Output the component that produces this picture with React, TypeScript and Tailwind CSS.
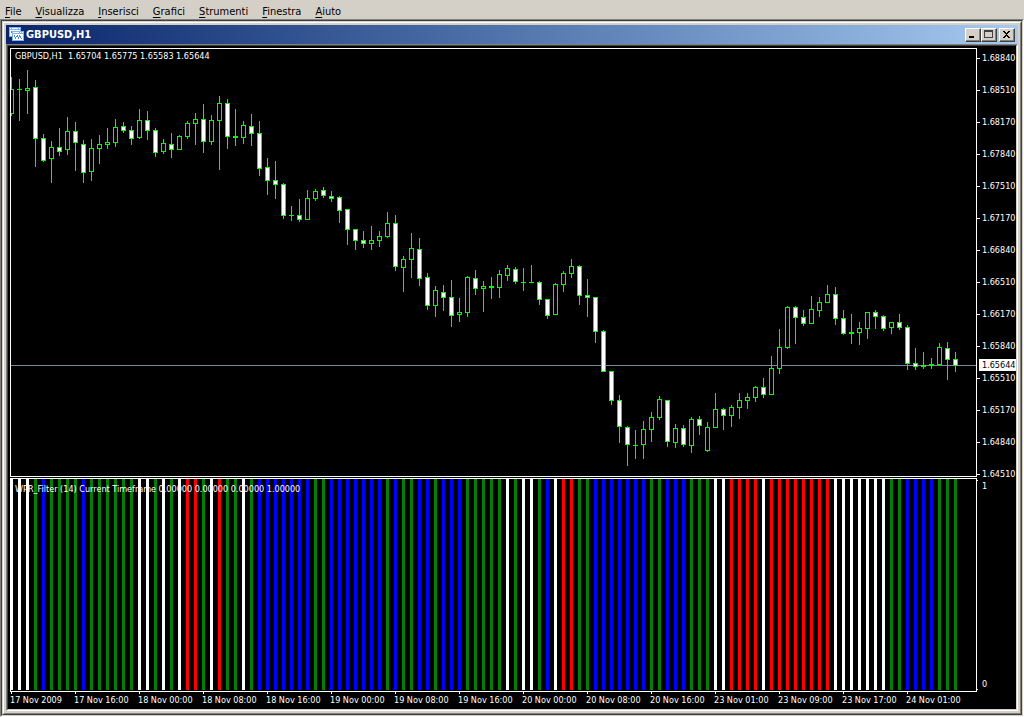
import React from 'react';

const STEP = 8;
const PANE_TOP = 49;
const BID_Y = 365;

type Candle = [high: number, low: number, top: number, bottom: number, bearish: number];

const CANDLES: Candle[] = [
  [77, 116, 89, 114, 0], [79, 121, 89, 90, 0], [70, 114, 88, 91, 0], [80, 167, 87, 139, 1],
  [134, 162, 138, 161, 1], [141, 183, 147, 159, 0], [128, 156, 147, 152, 1], [117, 155, 131, 150, 0],
  [122, 171, 131, 143, 1], [140, 183, 144, 173, 1], [139, 181, 148, 172, 0], [135, 164, 144, 149, 0],
  [128, 149, 142, 145, 0], [119, 147, 127, 143, 0], [122, 133, 126, 131, 1], [126, 145, 130, 139, 1],
  [109, 139, 120, 138, 0], [111, 140, 120, 131, 1], [128, 157, 130, 153, 1], [139, 154, 143, 152, 0],
  [133, 158, 144, 150, 1], [135, 150, 136, 150, 0], [121, 139, 123, 137, 0], [113, 145, 119, 124, 0],
  [104, 153, 119, 142, 1], [115, 145, 120, 142, 0], [96, 170, 103, 121, 0], [99, 149, 103, 137, 1],
  [109, 146, 136, 138, 0], [121, 144, 125, 138, 0], [114, 146, 126, 134, 1], [121, 176, 133, 169, 1],
  [158, 195, 167, 181, 1], [161, 199, 180, 185, 1], [183, 219, 184, 216, 1], [206, 221, 215, 216, 0],
  [199, 222, 215, 220, 1], [190, 220, 198, 220, 0], [189, 201, 191, 199, 0], [187, 198, 190, 196, 1],
  [191, 202, 196, 199, 1], [196, 223, 197, 211, 1], [209, 245, 209, 230, 1], [229, 250, 229, 241, 1],
  [231, 248, 240, 244, 1], [226, 250, 240, 244, 0], [231, 247, 236, 241, 0], [212, 238, 223, 237, 0],
  [215, 271, 223, 267, 1], [256, 292, 259, 268, 0], [233, 278, 248, 260, 0], [238, 286, 249, 279, 1],
  [273, 310, 277, 306, 1], [286, 317, 290, 306, 0], [285, 311, 292, 298, 1], [280, 327, 297, 316, 1],
  [298, 322, 312, 315, 0], [276, 317, 277, 313, 0], [270, 295, 278, 289, 1], [281, 312, 286, 289, 0],
  [277, 299, 286, 288, 0], [270, 298, 274, 288, 0], [265, 281, 268, 276, 0], [267, 284, 269, 282, 1],
  [268, 291, 282, 283, 0], [265, 283, 282, 283, 0], [281, 305, 282, 300, 1], [299, 319, 299, 316, 1],
  [283, 315, 284, 315, 0], [271, 292, 273, 285, 0], [259, 278, 266, 274, 0], [265, 305, 266, 296, 1],
  [279, 317, 295, 298, 1], [297, 343, 297, 332, 1], [330, 372, 331, 372, 1], [371, 405, 371, 401, 1],
  [395, 443, 400, 427, 1], [426, 466, 427, 445, 1], [430, 459, 445, 446, 0], [421, 459, 429, 445, 0],
  [412, 442, 417, 430, 0], [396, 420, 399, 418, 0], [400, 447, 400, 442, 1], [424, 448, 428, 443, 0],
  [425, 447, 428, 445, 1], [417, 453, 419, 446, 0], [416, 435, 419, 426, 1], [422, 452, 427, 451, 0],
  [393, 428, 409, 428, 0], [408, 430, 409, 416, 1], [405, 427, 407, 416, 0], [393, 419, 400, 408, 0],
  [393, 409, 397, 401, 0], [386, 402, 387, 398, 0], [378, 398, 387, 395, 1], [356, 395, 368, 395, 0],
  [329, 374, 347, 369, 0], [306, 349, 307, 348, 0], [306, 344, 307, 318, 1], [310, 326, 317, 324, 1],
  [296, 324, 309, 324, 0], [297, 317, 302, 311, 0], [285, 303, 294, 303, 0], [287, 325, 294, 319, 1],
  [310, 335, 318, 334, 1], [314, 344, 332, 334, 0], [322, 345, 328, 333, 0], [312, 339, 312, 329, 0],
  [310, 329, 312, 317, 1], [315, 331, 316, 329, 1], [322, 334, 322, 328, 0], [314, 330, 322, 328, 1],
  [325, 370, 327, 364, 1], [348, 370, 363, 367, 1], [352, 369, 365, 367, 0], [358, 369, 364, 366, 0],
  [343, 365, 347, 365, 0], [342, 380, 348, 360, 1], [352, 372, 359, 366, 1],
];

// one letter per candle: White, Green, Blue, Red
const FILTER =
  'WWWGBGGGGBGGGGGGWWGWGWRRGWRGGWGBBBBBBBGG' +
  'BBBBBBBGBGGBBGBBBGGGGGWGWWGBWRRGGBBBBBBB' +
  'GGBBBGGGWWRRRRWRRRRRRRRWWWWWWWGGBBBBGGG';

const FILTER_COLORS: Record<string, string> = {
  W: '#ffffff',
  G: '#008000',
  B: '#0000ff',
  R: '#ff0000',
};

const MENU = ['File', 'Visualizza', 'Inserisci', 'Grafici', 'Strumenti', 'Finestra', 'Aiuto'];

const PRICES = [
  '1.68840', '1.68510', '1.68170', '1.67840', '1.67510', '1.67170', '1.66840',
  '1.66510', '1.66170', '1.65840', '1.65510', '1.65170', '1.64840', '1.64510',
];

const TIMES = [
  '17 Nov 2009', '17 Nov 16:00', '18 Nov 00:00', '18 Nov 08:00', '18 Nov 16:00',
  '19 Nov 00:00', '19 Nov 08:00', '19 Nov 16:00', '20 Nov 00:00', '20 Nov 08:00',
  '20 Nov 16:00', '23 Nov 01:00', '23 Nov 09:00', '23 Nov 17:00', '24 Nov 01:00',
];

function MenuBar() {
  return (
    <nav className="flex h-[19px] items-center gap-3.5 pt-1 pl-[5px] text-[11px] leading-4 text-black">
      {MENU.map((item) => (
        <button key={item} type="button">
          <span className="underline underline-offset-2">{item[0]}</span>
          {item.slice(1)}
        </button>
      ))}
    </nav>
  );
}

function ChartIcon() {
  return (
    <svg width="15" height="15" viewBox="0 0 15 15" shapeRendering="crispEdges" aria-hidden="true">
      <rect x="0" y="0" width="12" height="10" fill="#7fb2f5" />
      <rect x="1" y="3" width="10" height="6" fill="#ffffff" />
      <path d="M1 1h1v1h-1zM3 1h6v1h-6zM10 1h1v1h-1z" fill="#ffffff" />
      <path d="M2 4h1v2h-1zM3 6h1v1h-1z" fill="#4a86e0" />
      <rect x="3" y="4" width="12" height="10" fill="#7fb2f5" />
      <rect x="4" y="7" width="10" height="6" fill="#ffffff" />
      <path d="M4 5h6v1h-6zM11 5h1v1h-1zM13 5h1v1h-1z" fill="#ffffff" />
      <path d="M5 8h1v2h-1zM6 10h1v2h-1zM7 9h1v1h-1zM8 8h1v2h-1zM9 10h1v2h-1zM10 8h1v2h-1zM11 9h1v2h-1zM12 11h1v1h-1z" fill="#4a86e0" />
    </svg>
  );
}

function WindowButton({ label, children }: { label: string; children: React.ReactNode }) {
  return (
    <button
      type="button"
      aria-label={label}
      className="h-3.5 w-4 border border-t-white border-l-white border-r-[#404040] border-b-[#404040] bg-[#d4d0c8]"
    >
      <svg
        width="14"
        height="12"
        viewBox="0 0 14 12"
        shapeRendering="crispEdges"
        className="border-r border-b border-[#808080]"
      >
        {children}
      </svg>
    </button>
  );
}

function TitleBar() {
  return (
    <header className="flex h-[19px] items-center bg-linear-to-r from-[#0a246a] to-[#a6caf0] pr-[3px] pl-[3px]">
      <ChartIcon />
      <h1 className="ml-0.5 flex-1 text-[11px] leading-4 font-bold text-white">GBPUSD,H1</h1>
      <WindowButton label="Minimize">
        <rect x="3" y="8" width="6" height="2" fill="#000" />
      </WindowButton>
      <WindowButton label="Maximize">
        <path d="M2 1h10v9h-10zM3 3v6h8v-6z" fill="#404040" fillRule="evenodd" />
      </WindowButton>
      <div className="ml-0.5 flex">
        <WindowButton label="Close">
          <path
            d="M3 2h2v1h1v1h2v-1h1v-1h2v1h-1v1h-1v1h-1v2h1v1h1v1h1v1h-2v-1h-1v-1h-2v1h-1v1h-2v-1h1v-1h1v-1h1v-2h-1v-1h-1v-1h-1z"
            fill="#000"
          />
        </WindowButton>
      </div>
    </header>
  );
}

function CandleShape({ candle, x }: { candle: Candle; x: number }) {
  const [high, low, top, bottom, bearish] = candle;
  const height = bottom - top;
  return (
    <g>
      <rect x={x} y={high - PANE_TOP} width={1} height={low - high} fill="#00ff00" />
      <rect x={x - 2} y={top - PANE_TOP} width={5} height={height} fill="#00ff00" />
      {height > 2 && (
        <rect
          x={x - 1}
          y={top - PANE_TOP + 1}
          width={3}
          height={height - 2}
          fill={bearish ? '#ffffff' : '#000000'}
        />
      )}
    </g>
  );
}

function PricePane() {
  return (
    <section className="flex min-h-[429px] flex-1">
      <div className="relative min-w-0 flex-1 border border-white">
        <svg className="absolute inset-0 h-full w-full" shapeRendering="crispEdges" aria-label="Candles">
          <rect x="0" y={BID_Y - PANE_TOP} width="100%" height="1" fill="#778899" />
          {CANDLES.map((candle, i) => (
            <CandleShape key={i} candle={candle} x={i * STEP} />
          ))}
        </svg>
        <p className="absolute top-px left-1 leading-3 whitespace-pre">
          {'GBPUSD,H1  1.65704 1.65775 1.65583 1.65644'}
        </p>
      </div>
      <div className="relative w-[39px]">
        <ul className="flex flex-col gap-[26px] pt-[7px]">
          {PRICES.map((price) => (
            <li key={price} className="flex h-1.5 items-center gap-0.5 leading-3">
              <span className="h-px w-[3px] bg-white" />
              {price}
            </li>
          ))}
        </ul>
        <span className="absolute top-[311px] right-0 left-0.5 bg-white pl-[3px] leading-3 text-black">
          1.65644
        </span>
      </div>
    </section>
  );
}

function FilterPane() {
  return (
    <section className="mt-px flex h-[214px]">
      <div className="relative min-w-0 flex-1 border border-white">
        <svg className="absolute inset-0 h-full w-full" shapeRendering="crispEdges" aria-label="WPR filter">
          {FILTER.split('').map((c, i) => (
            <rect key={i} x={i * STEP - 1} y="0" width="3" height="211" fill={FILTER_COLORS[c]} />
          ))}
        </svg>
        <p className="absolute top-1 left-1 leading-3 whitespace-pre">
          WPR_Filter (14) Current Timeframe 0.00000 0.00000 0.00000 1.00000
        </p>
      </div>
      <div className="flex w-[39px] gap-1 py-0.5 leading-3">
        <div className="flex flex-col justify-between">
          <span className="h-px w-px bg-white" />
          <span className="h-px w-px bg-white" />
        </div>
        <div className="flex flex-col justify-between">
          <span>1</span>
          <span>0</span>
        </div>
      </div>
    </section>
  );
}

function TimeAxis() {
  return (
    <ul className="flex h-[17px] overflow-hidden leading-3">
      {TIMES.map((time) => (
        <li key={time} className="w-16 shrink-0 whitespace-nowrap">
          <span className="ml-px block h-0.5 w-px bg-white" />
          {time}
        </li>
      ))}
    </ul>
  );
}

export default function App() {
  return (
    <div className="flex min-h-screen flex-col bg-[#d4d0c8] font-['DejaVu_Sans_Condensed','DejaVu_Sans',sans-serif]">
      <MenuBar />
      <main className="flex flex-1 flex-col border border-t-[#808080] border-r-white border-b-white border-l-[#808080]">
        <div className="flex flex-1 flex-col border border-t-[#404040] border-r-[#d4d0c8] border-b-[#d4d0c8] border-l-[#404040]">
          <div className="flex flex-1 flex-col border border-t-[#d4d0c8] border-r-[#404040] border-b-[#404040] border-l-[#d4d0c8]">
            <div className="flex flex-1 flex-col border border-t-white border-r-[#808080] border-b-[#808080] border-l-white p-0.5">
              <TitleBar />
              <div className="flex flex-1 flex-col border border-t-[#808080] border-r-white border-b-white border-l-[#808080]">
                <div className="flex flex-1 flex-col border border-t-[#404040] border-r-[#d4d0c8] border-b-[#d4d0c8] border-l-[#404040] bg-black pt-0.5 pl-0.5 text-[9px] text-white">
                  <PricePane />
                  <FilterPane />
                  <TimeAxis />
                </div>
              </div>
            </div>
          </div>
        </div>
      </main>
    </div>
  );
}
